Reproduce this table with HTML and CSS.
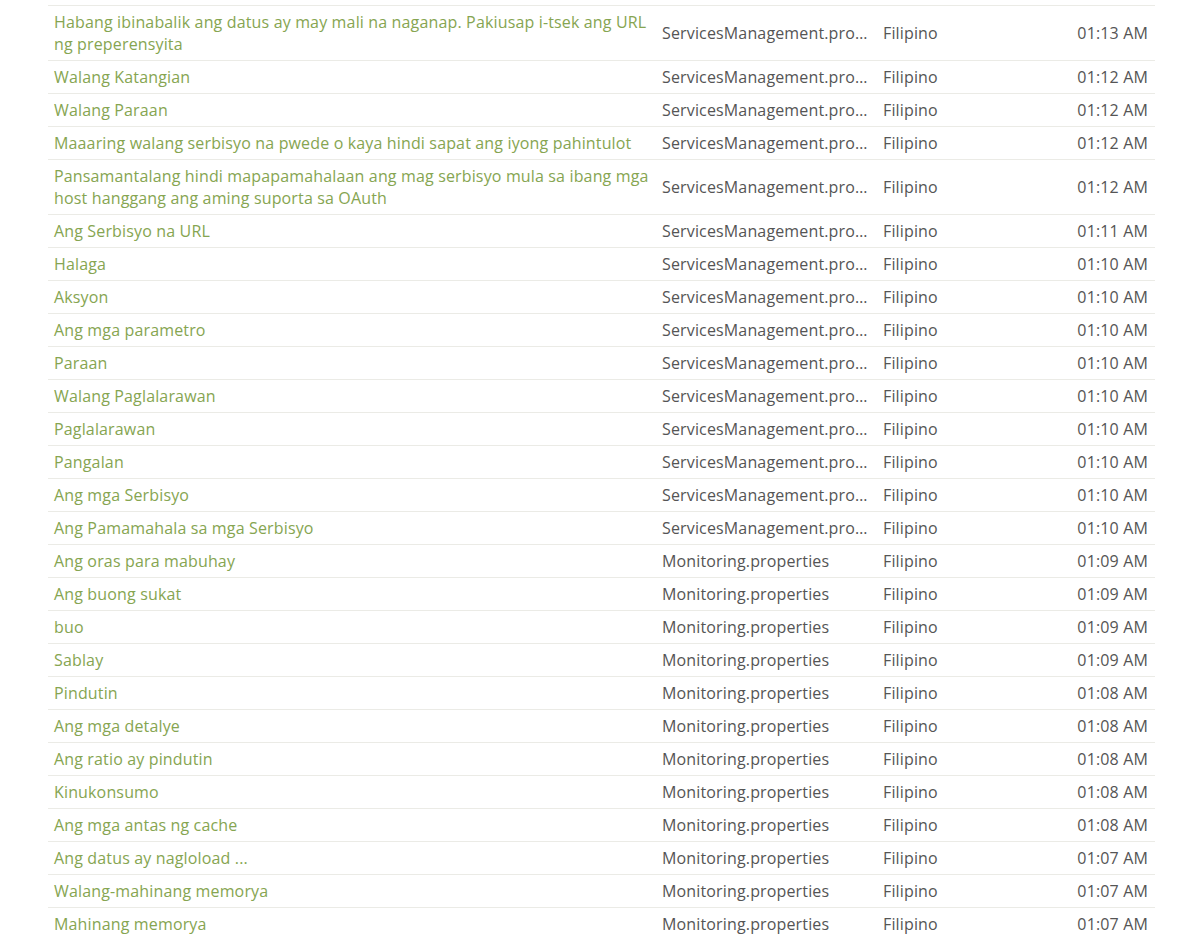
FILE: index.html
```html
<!DOCTYPE html>
<html>
<head>
<meta charset="utf-8">
<link rel="stylesheet" href="styles.css">
</head>
<body>
<div class="page">
<table class="list">
<colgroup><col class="c1"><col class="c2"><col class="c3"><col class="c4"></colgroup>
<tbody>
<tr><td><a>Habang ibinabalik ang datus ay may mali na naganap. Pakiusap i-tsek ang URL ng preperensyita</a></td><td class="file">ServicesManagement.properties</td><td>Filipino</td><td class="time">01:13 AM</td></tr>
<tr><td><a>Walang Katangian</a></td><td class="file">ServicesManagement.properties</td><td>Filipino</td><td class="time">01:12 AM</td></tr>
<tr><td><a>Walang Paraan</a></td><td class="file">ServicesManagement.properties</td><td>Filipino</td><td class="time">01:12 AM</td></tr>
<tr><td><a>Maaaring walang serbisyo na pwede o kaya hindi sapat ang iyong pahintulot</a></td><td class="file">ServicesManagement.properties</td><td>Filipino</td><td class="time">01:12 AM</td></tr>
<tr><td><a>Pansamantalang hindi mapapamahalaan ang mag serbisyo mula sa ibang mga host hanggang ang aming suporta sa OAuth</a></td><td class="file">ServicesManagement.properties</td><td>Filipino</td><td class="time">01:12 AM</td></tr>
<tr><td><a>Ang Serbisyo na URL</a></td><td class="file">ServicesManagement.properties</td><td>Filipino</td><td class="time">01:11 AM</td></tr>
<tr><td><a>Halaga</a></td><td class="file">ServicesManagement.properties</td><td>Filipino</td><td class="time">01:10 AM</td></tr>
<tr><td><a>Aksyon</a></td><td class="file">ServicesManagement.properties</td><td>Filipino</td><td class="time">01:10 AM</td></tr>
<tr><td><a>Ang mga parametro</a></td><td class="file">ServicesManagement.properties</td><td>Filipino</td><td class="time">01:10 AM</td></tr>
<tr><td><a>Paraan</a></td><td class="file">ServicesManagement.properties</td><td>Filipino</td><td class="time">01:10 AM</td></tr>
<tr><td><a>Walang Paglalarawan</a></td><td class="file">ServicesManagement.properties</td><td>Filipino</td><td class="time">01:10 AM</td></tr>
<tr><td><a>Paglalarawan</a></td><td class="file">ServicesManagement.properties</td><td>Filipino</td><td class="time">01:10 AM</td></tr>
<tr><td><a>Pangalan</a></td><td class="file">ServicesManagement.properties</td><td>Filipino</td><td class="time">01:10 AM</td></tr>
<tr><td><a>Ang mga Serbisyo</a></td><td class="file">ServicesManagement.properties</td><td>Filipino</td><td class="time">01:10 AM</td></tr>
<tr><td><a>Ang Pamamahala sa mga Serbisyo</a></td><td class="file">ServicesManagement.properties</td><td>Filipino</td><td class="time">01:10 AM</td></tr>
<tr><td><a>Ang oras para mabuhay</a></td><td class="file">Monitoring.properties</td><td>Filipino</td><td class="time">01:09 AM</td></tr>
<tr><td><a>Ang buong sukat</a></td><td class="file">Monitoring.properties</td><td>Filipino</td><td class="time">01:09 AM</td></tr>
<tr><td><a>buo</a></td><td class="file">Monitoring.properties</td><td>Filipino</td><td class="time">01:09 AM</td></tr>
<tr><td><a>Sablay</a></td><td class="file">Monitoring.properties</td><td>Filipino</td><td class="time">01:09 AM</td></tr>
<tr><td><a>Pindutin</a></td><td class="file">Monitoring.properties</td><td>Filipino</td><td class="time">01:08 AM</td></tr>
<tr><td><a>Ang mga detalye</a></td><td class="file">Monitoring.properties</td><td>Filipino</td><td class="time">01:08 AM</td></tr>
<tr><td><a>Ang ratio ay pindutin</a></td><td class="file">Monitoring.properties</td><td>Filipino</td><td class="time">01:08 AM</td></tr>
<tr><td><a>Kinukonsumo</a></td><td class="file">Monitoring.properties</td><td>Filipino</td><td class="time">01:08 AM</td></tr>
<tr><td><a>Ang mga antas ng cache</a></td><td class="file">Monitoring.properties</td><td>Filipino</td><td class="time">01:08 AM</td></tr>
<tr><td><a>Ang datus ay nagloload ...</a></td><td class="file">Monitoring.properties</td><td>Filipino</td><td class="time">01:07 AM</td></tr>
<tr><td><a>Walang-mahinang memorya</a></td><td class="file">Monitoring.properties</td><td>Filipino</td><td class="time">01:07 AM</td></tr>
<tr><td><a>Mahinang memorya</a></td><td class="file">Monitoring.properties</td><td>Filipino</td><td class="time">01:07 AM</td></tr>
</tbody>
</table>
</div>
</body>
</html>
```
FILE: styles.css
```css
html, body {
  margin: 0;
  padding: 0;
  background: #fff;
}
.page {
  padding: 5px 36px 0 48px;
}
.list {
  width: 1107px;
  border-collapse: collapse;
  table-layout: fixed;
  font-family: "Open Sans", "Noto Sans", sans-serif;
  font-size: 16px;
  line-height: 22px;
  letter-spacing: 0.15px;
  color: #555;
  border-top: 1px solid #ebebe6;
}
.c1 { width: 608px; }
.c2 { width: 221px; }
.c3 { width: 140px; }
.c4 { width: 138px; }
.list td {
  padding: 5px 6px;
  border-bottom: 1px solid #ebebe6;
  vertical-align: middle;
}
.list a {
  color: #86a551;
  text-decoration: none;
}
.list td.file {
  white-space: nowrap;
  overflow: hidden;
  text-overflow: ellipsis;
}
.list td.time {
  text-align: right;
  padding-right: 7px;
}
```
